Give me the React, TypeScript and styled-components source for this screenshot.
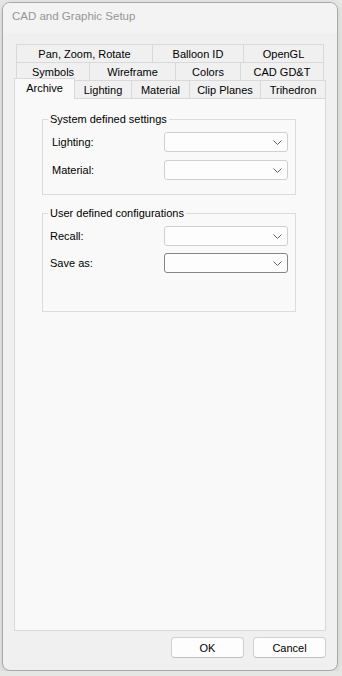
import styled, { createGlobalStyle } from "styled-components";

const GlobalStyle = createGlobalStyle`
  html, body {
    margin: 0;
    padding: 0;
    background: #e4e7e4;
  }
  body {
    font-family: "Liberation Sans", Arial, sans-serif;
    font-size: 11px;
    color: #000;
  }
`;

type TabDef = { label: string; width: number };

const rowOne: TabDef[] = [
  { label: "Pan, Zoom, Rotate", width: 137 },
  { label: "Balloon ID", width: 92 },
  { label: "OpenGL", width: 81 },
];

const rowTwo: TabDef[] = [
  { label: "Symbols", width: 74 },
  { label: "Wireframe", width: 87 },
  { label: "Colors", width: 66 },
  { label: "CAD GD&T", width: 84 },
];

const rowThree: TabDef[] = [
  { label: "Archive", width: 61 },
  { label: "Lighting", width: 58 },
  { label: "Material", width: 59 },
  { label: "Clip Planes", width: 72 },
  { label: "Trihedron", width: 66 },
];

function Chevron() {
  return (
    <svg width="9" height="5" viewBox="0 0 9 5">
      <path d="M0.5 0.5 L4.5 4.5 L8.5 0.5" fill="none" stroke="#5f5f5f" strokeWidth="1" />
    </svg>
  );
}

function Combo({ focused }: { focused?: boolean }) {
  return (
    <ComboBox $focused={focused}>
      <Chevron />
    </ComboBox>
  );
}

export default function App() {
  return (
    <>
      <GlobalStyle />
      <Window>
        <TitleBar>CAD and Graphic Setup</TitleBar>
        <Body>
          <TabStrip>
            <TabRow>
              {rowOne.map((t) => (
                <Tab key={t.label} $width={t.width}>
                  {t.label}
                </Tab>
              ))}
            </TabRow>
            <TabRow>
              {rowTwo.map((t) => (
                <Tab key={t.label} $width={t.width}>
                  {t.label}
                </Tab>
              ))}
            </TabRow>
            <TabRow $front>
              {rowThree.map((t, i) => (
                <Tab key={t.label} $width={t.width} $active={i === 0}>
                  {t.label}
                </Tab>
              ))}
            </TabRow>
          </TabStrip>
          <Panel>
            <Group $gapBottom={14}>
              <Legend>System defined settings</Legend>
              <FieldRow $indent={9}>
                <span>Lighting:</span>
                <Combo />
              </FieldRow>
              <FieldRow $indent={9}>
                <span>Material:</span>
                <Combo />
              </FieldRow>
            </Group>
            <Group $gapBottom={38} $rowGap={7}>
              <Legend>User defined configurations</Legend>
              <FieldRow $indent={7}>
                <span>Recall:</span>
                <Combo />
              </FieldRow>
              <FieldRow $indent={7}>
                <span>Save as:</span>
                <Combo focused />
              </FieldRow>
            </Group>
          </Panel>
          <Footer>
            <Button>OK</Button>
            <Button>Cancel</Button>
          </Footer>
        </Body>
      </Window>
    </>
  );
}

const Window = styled.div`
  box-sizing: border-box;
  margin: 2px 0 0 2px;
  width: 336px;
  height: 669px;
  border: 1px solid #a9a9a9;
  border-radius: 8px;
  background: #f0f0f0;
  box-shadow: 0 2px 6px rgba(0, 0, 0, 0.12);
  display: flex;
  flex-direction: column;
  overflow: hidden;
`;

const TitleBar = styled.div`
  height: 30px;
  flex: none;
  display: flex;
  align-items: center;
  padding-left: 9px;
  padding-bottom: 4px;
  box-sizing: border-box;
  font-size: 11.5px;
  color: #969696;
  background: #f3f3f3;
`;

const Body = styled.div`
  flex: 1;
  display: flex;
  flex-direction: column;
  padding: 11px 11px 12px 11px;
  min-height: 0;
`;

const TabStrip = styled.div`
  display: flex;
  flex-direction: column;
  padding-left: 2px;
`;

const TabRow = styled.div<{ $front?: boolean }>`
  display: flex;
  margin-left: ${(p) => (p.$front ? "-2px" : "0")};
`;

const Tab = styled.div<{ $width: number; $active?: boolean }>`
  box-sizing: border-box;
  width: ${(p) => p.$width}px;
  height: ${(p) => (p.$active ? 21 : 18)}px;
  margin: ${(p) => (p.$active ? "-2px 0 -1px 0" : "0")};
  & + & {
    margin-left: -1px;
  }
  border: 1px solid #d9d9d9;
  border-bottom: none;
  background: ${(p) => (p.$active ? "#f9f9f9" : "#f0f0f0")};
  display: flex;
  align-items: center;
  justify-content: center;
  padding-bottom: ${(p) => (p.$active ? 3 : 0)}px;
  white-space: nowrap;
  position: ${(p) => (p.$active ? "relative" : "static")};
  z-index: ${(p) => (p.$active ? 1 : "auto")};
`;

const Panel = styled.div`
  flex: 1;
  box-sizing: border-box;
  width: 312px;
  border: 1px solid #d9d9d9;
  background: #f9f9f9;
  padding: 13px 0 0 27px;
  display: flex;
  flex-direction: column;
  gap: 11px;
`;

const Group = styled.fieldset<{ $gapBottom: number; $rowGap?: number }>`
  box-sizing: border-box;
  width: 254px;
  margin: 0;
  padding: 5px 0 ${(p) => p.$gapBottom}px 0;
  border: 1px solid #dcdcdc;
  display: flex;
  flex-direction: column;
  gap: ${(p) => p.$rowGap ?? 8}px;
  min-width: 0;
`;

const Legend = styled.legend`
  margin-left: 5px;
  padding: 0 2px;
  line-height: 15px;
  font-size: 11px;
`;

const FieldRow = styled.div<{ $indent: number }>`
  display: flex;
  align-items: center;
  justify-content: space-between;
  padding: 0 7px 0 ${(p) => p.$indent}px;
  height: 20px;
`;

const ComboBox = styled.div<{ $focused?: boolean }>`
  box-sizing: border-box;
  width: 124px;
  height: 20px;
  border: 1px solid ${(p) => (p.$focused ? "#858585" : "#d0d0d0")};
  border-radius: 3px;
  background: #fdfdfd;
  display: flex;
  align-items: center;
  justify-content: flex-end;
  padding-right: 5px;
`;

const Footer = styled.div`
  display: flex;
  justify-content: flex-end;
  gap: 9px;
  margin-top: 6px;
`;

const Button = styled.button`
  box-sizing: border-box;
  width: 73px;
  height: 21px;
  border: 1px solid #d0d0d0;
  border-bottom-color: #bdbdbd;
  border-radius: 4px;
  background: #fdfdfd;
  font-family: "Liberation Sans", Arial, sans-serif;
  font-size: 11px;
  color: #000;
  padding: 0;
`;
